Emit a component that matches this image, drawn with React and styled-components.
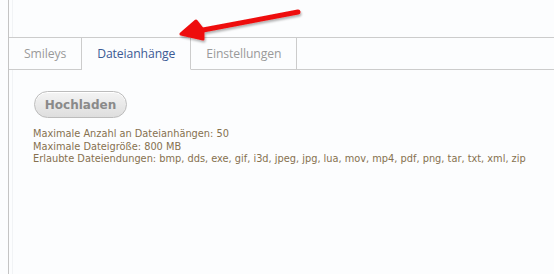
import React from "react";
import styled, { createGlobalStyle } from "styled-components";

const GlobalStyle = createGlobalStyle`
  * {
    box-sizing: border-box;
  }

  html, body {
    margin: 0;
    background: #fcfdfe;
  }

  body {
    font-family: "DejaVu Sans", Verdana, sans-serif;
  }
`;

const Frame = styled.div`
  position: relative;
  margin-left: 8px;
  height: 274px;
  border-left: 1px solid #c4c4c4;
  box-shadow: inset 3px 0 0 #fcfdfe, inset 4px 0 0 #f1f3f5;
  overflow: hidden;
`;

const TopSpace = styled.div`
  height: 37px;
`;

const TabBar = styled.nav`
  display: flex;
  border-top: 1px solid #cccccc;
`;

const Tab = styled.div`
  height: 32px;
  padding: 0 15px;
  display: flex;
  align-items: center;
  font-family: "Open Sans", "Noto Sans", sans-serif;
  font-size: 12.2px;
  letter-spacing: -0.1px;
  color: ${p => (p.active ? "#3d5a94" : "#9a9a9a")};
  border-right: 1px solid #cccccc;
  border-bottom: 1px solid ${p => (p.active ? "transparent" : "#cccccc")};
  background: #fcfdfe;
`;

const TabFiller = styled.div`
  flex: 1;
  border-bottom: 1px solid #cccccc;
`;

const Panel = styled.section`
  padding: 21px 0 0 25px;
`;

const UploadButton = styled.button`
  width: 93px;
  height: 27px;
  border: 1px solid #bcbcbc;
  border-radius: 14px;
  background: linear-gradient(#f4f4f4, #dedede);
  box-shadow: inset 0 1px 0 #ffffff;
  color: #8a8a8a;
  font-family: "DejaVu Sans", Verdana, sans-serif;
  font-weight: bold;
  font-size: 12px;
  padding: 0;
  cursor: pointer;
`;

const InfoList = styled.div`
  margin-top: 10px;
  margin-left: -1px;
  font-family: "DejaVu Sans Condensed", "DejaVu Sans", sans-serif;
  font-size: 10.9px;
  line-height: 12.5px;
  color: #86714f;
`;

const InfoLine = styled.div``;

const Arrow = styled.svg`
  position: absolute;
  left: 170px;
  top: 0;
  pointer-events: none;
`;

const tabs = ["Smileys", "Dateianhänge", "Einstellungen"];

const extensions = [
  "bmp", "dds", "exe", "gif", "i3d", "jpeg", "jpg", "lua", "mov",
  "mp4", "pdf", "png", "tar", "txt", "xml", "zip"
];

function App() {
  return (
    <React.Fragment>
      <GlobalStyle />
      <Frame>
        <TopSpace />
        <TabBar>
          {tabs.map(t => (
            <Tab key={t} active={t === "Dateianhänge"}>
              {t}
            </Tab>
          ))}
          <TabFiller />
        </TabBar>
        <Panel>
          <UploadButton>Hochladen</UploadButton>
          <InfoList>
            <InfoLine>Maximale Anzahl an Dateianhängen: 50</InfoLine>
            <InfoLine>Maximale Dateigröße: 800 MB</InfoLine>
            <InfoLine>Erlaubte Dateiendungen: {extensions.join(", ")}</InfoLine>
          </InfoList>
        </Panel>
        <Arrow width="140" height="45" viewBox="0 0 140 45">
          <defs>
            <filter id="shadow" x="-20%" y="-50%" width="140%" height="200%">
              <feDropShadow dx="1" dy="2" stdDeviation="1.2" floodColor="#000" floodOpacity="0.3" />
            </filter>
          </defs>
          <g filter="url(#shadow)" fill="#ee1111" stroke="#ee1111" strokeLinejoin="round" strokeLinecap="round">
            <line x1="119" y1="12" x2="24" y2="30" strokeWidth="5" />
            <polygon points="2,34 17,21 24,30 24,39" strokeWidth="3" />
          </g>
        </Arrow>
      </Frame>
    </React.Fragment>
  );
}

export default App;
